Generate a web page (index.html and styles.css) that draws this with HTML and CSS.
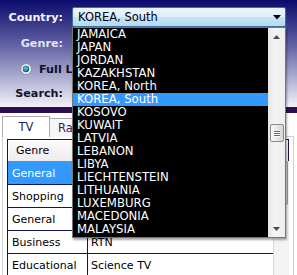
FILE: index.html
```html
<!DOCTYPE html>
<html>
<head>
<meta charset="utf-8">
<link rel="stylesheet" href="styles.css">
</head>
<body>
<div class="top">
  <div class="row r1">
    <span class="lbl lbl-white">Country:</span>
    <div class="select">
      <span class="select-text">KOREA, South</span>
      <svg class="select-arrow" width="8" height="5" viewBox="0 0 8 5"><path d="M0 0H8L4 4.5Z" fill="#000"/></svg>
    </div>
  </div>
  <div class="row r2">
    <span class="lbl lbl-light">Genre:</span>
  </div>
  <div class="row r3">
    <svg class="radio" width="12" height="12" viewBox="0 0 12 12">
      <defs>
        <linearGradient id="rg" x1="0" y1="0" x2="1" y2="1"><stop offset="0" stop-color="#d8d8d8"/><stop offset="1" stop-color="#ffffff"/></linearGradient>
        <radialGradient id="dot" cx="0.45" cy="0.4" r="0.6"><stop offset="0" stop-color="#6fd2f2"/><stop offset="0.6" stop-color="#1c8bb8"/><stop offset="1" stop-color="#0b4e72"/></radialGradient>
      </defs>
      <circle cx="6" cy="6" r="5.5" fill="url(#rg)" stroke="#8c8c94" stroke-width="1"/>
      <circle cx="6" cy="6" r="3.2" fill="url(#dot)"/>
    </svg>
    <span class="radio-lbl">Full L</span>
  </div>
  <div class="row r4">
    <span class="lbl lbl-dark">Search:</span>
  </div>
</div>
<div class="bar"></div>
<div class="tabs">
  <div class="tab tab-active">TV</div>
  <div class="tab tab-idle">Ra</div>
</div>
<div class="panel">
  <div class="grid">
    <div class="head">
      <div class="hc c1">Genre</div>
      <div class="hc c2"></div>
    </div>
    <div class="body">
      <div class="rows">
        <div class="tr sel"><div class="td c1">General</div><div class="td c2"></div></div>
        <div class="tr"><div class="td c1">Shopping</div><div class="td c2"></div></div>
        <div class="tr"><div class="td c1">General</div><div class="td c2"></div></div>
        <div class="tr"><div class="td c1">Business</div><div class="td c2">RTN</div></div>
        <div class="tr"><div class="td c1">Educational</div><div class="td c2">Science TV</div></div>
      </div>
      <div class="vscroll"><div class="vthumb"></div></div>
    </div>
  </div>
</div>

<div class="dropdown">
  <ul class="list">
    <li>JAMAICA</li>
    <li>JAPAN</li>
    <li>JORDAN</li>
    <li>KAZAKHSTAN</li>
    <li>KOREA, North</li>
    <li class="hl">KOREA, South</li>
    <li>KOSOVO</li>
    <li>KUWAIT</li>
    <li>LATVIA</li>
    <li>LEBANON</li>
    <li>LIBYA</li>
    <li>LIECHTENSTEIN</li>
    <li>LITHUANIA</li>
    <li>LUXEMBURG</li>
    <li>MACEDONIA</li>
    <li>MALAYSIA</li>
  </ul>
  <div class="dscroll">
    <div class="sbtn"><svg width="7" height="4" viewBox="0 0 7 4"><path d="M3.5 0L7 4H0Z" fill="#4a4a4a"/></svg></div>
    <div class="dthumb"><span class="grip"></span><span class="grip"></span><span class="grip"></span></div>
    <div class="sbtn sbtn-down"><svg width="7" height="4" viewBox="0 0 7 4"><path d="M0 0H7L3.5 4Z" fill="#4a4a4a"/></svg></div>
  </div>
</div>
</body>
</html>
```

FILE: styles.css
```css
* { box-sizing: border-box; }
html, body { margin: 0; padding: 0; }
body {
  width: 297px;
  height: 275px;
  overflow: hidden;
  position: relative;
  background: #ffffff;
  font-family: "DejaVu Sans", Verdana, sans-serif;
}

/* top form */
.top {
  height: 107px;
  padding-top: 7px;
  background: linear-gradient(#0b0b6c 0%, #5c5ca0 40%, #b4b4d4 75%, #f2f2f8 100%);
}
.row { display: flex; align-items: center; }
.r1 { height: 20px; }
.r2 { height: 26px; margin-top: 3px; }
.r3 { height: 26px; padding-left: 20px; }
.r4 { height: 23px; }
.lbl {
  width: 63px;
  margin-right: 9px;
  text-align: right;
  font-weight: bold;
  font-size: 11.2px;
  flex: none;
}
.lbl-white { color: #f4f4ff; }
.lbl-light { color: #e2e2f4; }
.lbl-dark { color: #12122e; }
.radio { flex: none; }
.radio-lbl {
  margin-left: 7px;
  font-weight: bold;
  font-size: 11.2px;
  color: #10102c;
}

.select {
  width: 214px;
  height: 20px;
  display: flex;
  align-items: center;
  justify-content: space-between;
  padding: 0 4px 0 5px;
  border: 1px solid #3f6f96;
  border-radius: 2px;
  background: linear-gradient(#eaf5fc 0%, #ddeffb 48%, #c4e3f7 52%, #b5daf3 100%);
}
.select-text { font-size: 11.5px; color: #000; line-height: 18px; }
.select-arrow { display: block; }

/* dark bar */
.bar { height: 6px; background: #2b0e4f; }

/* tabs */
.tabs {
  display: flex;
  align-items: flex-end;
  height: 24px;
  padding-left: 2px;
}
.tab {
  font-size: 11.5px;
  border: 1px solid #a9a9b4;
  border-bottom: none;
  text-align: center;
}
.tab-active {
  width: 48px;
  height: 21px;
  line-height: 20px;
  background: #fff;
  color: #1a1a6c;
  position: relative;
  z-index: 1;
}
.tab-idle {
  width: 60px;
  height: 19px;
  line-height: 18px;
  margin-left: -1px;
  padding-left: 8px;
  text-align: left;
  background: #f6f6f8;
  color: #3a1a5c;
}

/* panel & table */
.panel {
  margin-left: 2px;
  width: 292px;
  height: 140px;
  border: 1px solid #cfcfd6;
  margin-top: -1px;
  padding: 2px 4px 0 4px;
}
.grid {
  width: 282px;
  border-left: 1px solid #141456;
  border-top: 1px solid #141456;
  font-size: 11px;
  color: #000;
}
.head {
  display: flex;
  height: 21px;
  border-right: 1px solid #141456;
}
.hc {
  line-height: 21px;
  background: linear-gradient(#fbfbfb, #ededed);
  box-shadow: inset 1px 1px 0 #fff;
}
.head .c1 { width: 80px; padding-left: 8px; border-right: 1px solid #b5b5b5; }
.head .c2 { flex: 1; padding-left: 4px; }
.body { display: flex; }
.rows { width: 265px; }
.tr {
  display: flex;
  height: 23px;
  border-top: 1px solid #141456;
}
.td {
  padding-top: 1px;
  line-height: 21px;
  white-space: nowrap;
  overflow: hidden;
}
.td.c1 { width: 80px; padding-left: 4px; border-right: 1px solid #141456; }
.td.c2 { flex: 1; padding-left: 3px; }
.tr.sel { background: #3399ff; color: #fff; border-top-color: #3399ff; }
.vscroll {
  width: 16px;
  height: 120px;
  background: #f3f3f3;
  border-left: 1px solid #d8d8d8;
  padding: 0 1px;
}
.vthumb {
  height: 44px;
  border: 1px solid #9a9a9a;
  border-radius: 2px;
  background: linear-gradient(to right, #f6f6f6, #dedede);
}

/* open dropdown */
.dropdown {
  position: absolute;
  left: 72px;
  top: 27px;
  width: 214px;
  height: 211px;
  display: flex;
  border: 1px solid #767676;
  background: #000;
  box-shadow: 1px 2px 2px rgba(0, 0, 0, 0.35);
}
.list {
  list-style: none;
  margin: 0;
  padding: 0;
  width: 195px;
}
.list li {
  height: 13px;
  line-height: 13px;
  padding-left: 4px;
  font-size: 11.7px;
  color: #fff;
  white-space: nowrap;
}
.list li.hl { background: #3399ff; }
.dscroll {
  width: 17px;
  display: flex;
  flex-direction: column;
  align-items: center;
  background: linear-gradient(to right, #e6e6e6, #f4f4f4 40%, #eeeeee);
}
.sbtn {
  height: 17px;
  width: 17px;
  display: flex;
  align-items: center;
  justify-content: center;
}
.sbtn svg { display: block; }
.sbtn-down { margin-top: auto; }
.dthumb {
  margin-top: 79px;
  width: 14px;
  height: 18px;
  border: 1px solid #8b8b8b;
  border-radius: 2px;
  background: linear-gradient(to right, #f8f8f8, #e4e4e4 60%, #d6d6d6);
  display: flex;
  flex-direction: column;
  align-items: center;
  justify-content: center;
  gap: 1px;
}
.grip {
  display: block;
  width: 6px;
  height: 1px;
  background: #6e6e6e;
  box-shadow: 0 1px 0 #ffffff;
}
```
